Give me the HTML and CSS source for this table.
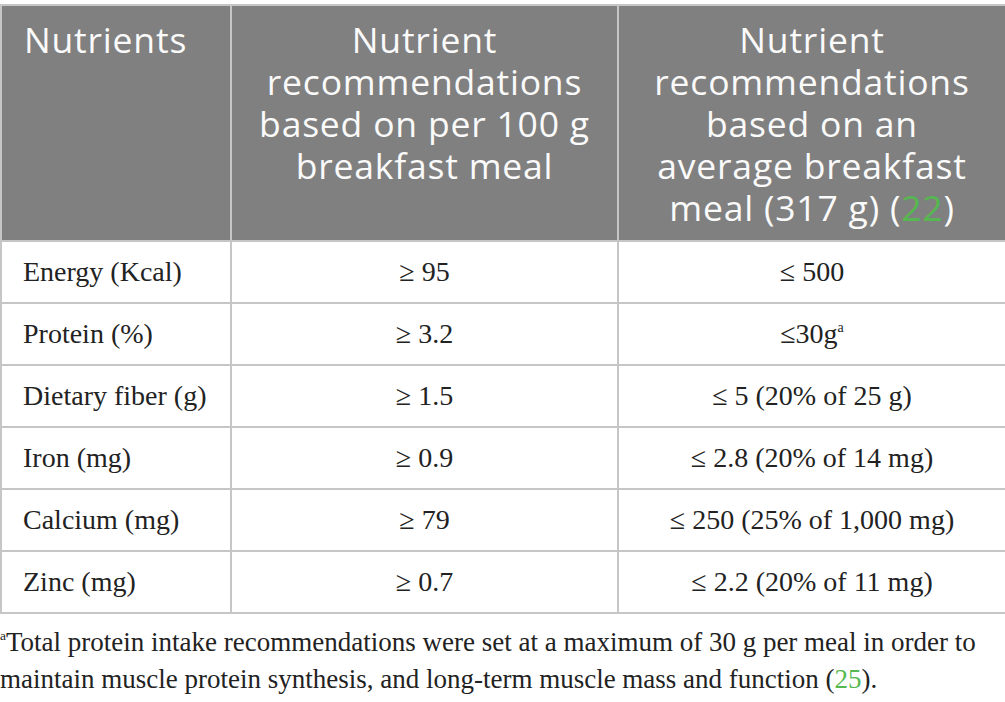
FILE: index.html
```html
<!DOCTYPE html>
<html lang="en">
<head>
<meta charset="utf-8">
<title>Nutrient recommendations</title>
<link rel="stylesheet" href="styles.css">
</head>
<body>
<div class="wrap">
  <table class="nt">
    <colgroup>
      <col class="c1"><col class="c2"><col class="c3">
    </colgroup>
    <thead>
      <tr>
        <th class="left">Nutrients</th>
        <th>Nutrient recommendations based on per 100&nbsp;g breakfast meal</th>
        <th>Nutrient recommendations based on an average breakfast meal (317&nbsp;g) (<a class="ref">22</a>)</th>
      </tr>
    </thead>
    <tbody>
      <tr><td class="left">Energy (Kcal)</td><td>≥ 95</td><td>≤ 500</td></tr>
      <tr><td class="left">Protein (%)</td><td>≥ 3.2</td><td>≤30g<sup>a</sup></td></tr>
      <tr><td class="left">Dietary fiber (g)</td><td>≥ 1.5</td><td>≤ 5 (20% of 25&nbsp;g)</td></tr>
      <tr><td class="left">Iron (mg)</td><td>≥ 0.9</td><td>≤ 2.8 (20% of 14&nbsp;mg)</td></tr>
      <tr><td class="left">Calcium (mg)</td><td>≥ 79</td><td>≤ 250 (25% of 1,000&nbsp;mg)</td></tr>
      <tr><td class="left">Zinc (mg)</td><td>≥ 0.7</td><td>≤ 2.2 (20% of 11&nbsp;mg)</td></tr>
    </tbody>
  </table>
  <p class="foot"><sup>a</sup>Total protein intake recommendations were set at a maximum of 30&nbsp;g per meal in order to maintain muscle protein synthesis, and long-term muscle mass and function (<a class="ref">25</a>).</p>
</div>
</body>
</html>
```
FILE: styles.css
```css
html, body {
  margin: 0;
  padding: 0;
  background: #ffffff;
}
.wrap {
  padding-top: 4px;
  width: 1005px;
}
.nt {
  width: 1005px;
  border-collapse: collapse;
  table-layout: fixed;
}
.c1 { width: 230px; }
.c2 { width: 387px; }
.c3 { width: 388px; }
.nt th {
  background: #808080;
  color: #fafafa;
  font-family: "Open Sans", "DejaVu Sans", sans-serif;
  font-weight: 400;
  font-size: 35.5px;
  letter-spacing: 0.8px;
  line-height: 42px;
  text-align: center;
  vertical-align: top;
  padding: 12px 20px 10px;
  border: 2px solid #c6c6c6;
  height: 236px;
  box-sizing: border-box;
}
.nt th.left { text-align: left; padding-left: 22px; }
.nt td {
  font-family: "Liberation Serif", "Times New Roman", serif;
  font-size: 28px;
  color: #222222;
  text-align: center;
  vertical-align: middle;
  height: 62px;
  box-sizing: border-box;
  padding: 0 20px;
  border: 2px solid #c6c6c6;
}
.nt td.left { text-align: left; padding-left: 21px; }
sup {
  font-size: 0.5em;
  line-height: 0;
  vertical-align: 0.8em;
}
.ref { color: #55b84f; text-decoration: none; }
.foot {
  margin: 10px 0 0;
  padding-left: 0;
  font-family: "Liberation Serif", "Times New Roman", serif;
  font-size: 27px;
  line-height: 37px;
  color: #222222;
}
```
